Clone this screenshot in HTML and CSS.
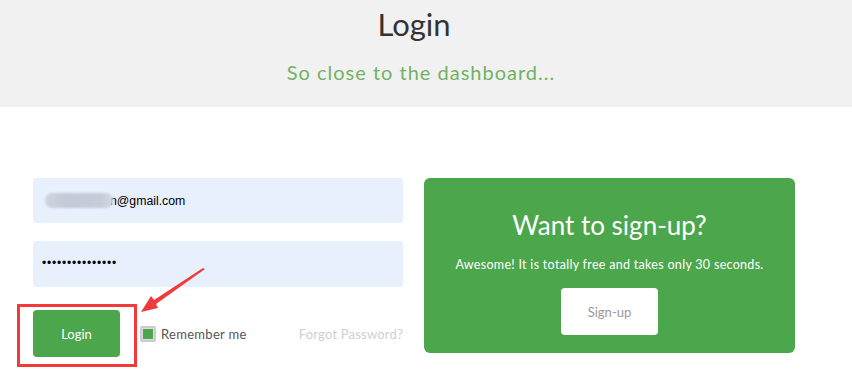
FILE: index.html
```html
<!DOCTYPE html>
<html>
<head>
<meta charset="utf-8">
<link rel="stylesheet" href="styles.css">
</head>
<body>
<header class="hero">
  <h1 class="hero-title">Login</h1>
  <p class="hero-sub">So close to the dashboard...</p>
</header>
<main class="main">
  <form class="login-form">
    <div class="field field-email"><span class="blur"></span><span class="field-text">n@gmail.com</span></div>
    <div class="field field-pass"><span class="dots">•••••••••••••••</span></div>
    <div class="actions">
      <button type="button" class="btn-login">Login</button>
      <label class="remember"><span class="check"><span class="check-fill"></span></span>Remember me</label>
      <a class="forgot">Forgot Password?</a>
    </div>
    <div class="annot-box"></div>
    <svg class="annot-arrow" width="70" height="46" viewBox="0 0 70 46">
      <polygon points="68,1 66,0 17,32 14,28 4,44 21,40 19,36" fill="#f23a3a"/>
    </svg>
  </form>
  <section class="card">
    <h2 class="card-title">Want to sign-up?</h2>
    <p class="card-text">Awesome! It is totally free and takes only 30 seconds.</p>
    <button type="button" class="btn-signup">Sign-up</button>
  </section>
</main>
</body>
</html>
```
FILE: styles.css
```css
* { box-sizing: border-box; }
html, body { margin: 0; padding: 0; background: #fff; }
body { font-family: Lato, "Open Sans", sans-serif; width: 852px; height: 376px; overflow: hidden; }

.hero { background: #f1f1f1; height: 107px; text-align: center; padding-top: 6px; }
.hero-title { margin: 0; padding-right: 24px; font-weight: 400; font-size: 31px; line-height: 36px; color: #333; letter-spacing: 0; }
.hero-sub { margin: 18px 0 0; padding-right: 10px; font-size: 20px; line-height: 24px; color: #71b264; font-weight: 400; letter-spacing: 1px; }

.main { display: flex; padding: 71px 0 0 33px; gap: 21px; }

.login-form { position: relative; width: 370px; margin: 0; }
.field { background: #e8f0fe; border-radius: 3px; display: flex; align-items: center; padding-left: 12px; font-family: "Liberation Sans", Arial, sans-serif; font-size: 12.3px; color: #000; }
.field-email { height: 45px; }
.field-pass { height: 46px; margin-top: 18px; padding-left: 9px; }
.blur { display: inline-block; width: 68px; height: 15px; margin-right: -3px; border-radius: 7px; background: linear-gradient(90deg, #d0d6e0, #c4cad6 30%, #c6ccd8 80%, #d3d9e3); filter: blur(1px); position: relative; z-index: 1; }
.dots { font-size: 12px; letter-spacing: 0.8px; position: relative; top: -1px; }

.actions { display: flex; align-items: center; margin-top: 23px; }
.btn-login { width: 87px; height: 47px; border: 0; border-radius: 4px; background: #4ca64c; color: #fff; font-family: Lato, sans-serif; font-size: 13px; padding: 0; }
.remember { display: flex; align-items: center; margin-left: 20px; font-size: 13px; color: #555; letter-spacing: 0.3px; }
.check { width: 16px; height: 16px; border: 2px solid #ccc; border-radius: 2px; background: #ddd; display: flex; align-items: center; justify-content: center; margin-right: 5px; }
.check-fill { width: 10px; height: 10px; background: #4ca64c; }
.forgot { margin-left: auto; font-size: 13px; color: #cfcfcf; letter-spacing: 0.2px; }

.annot-box { position: absolute; left: -16px; top: 126px; width: 120px; height: 63px; border: 3px solid #f23a3a; }
.annot-arrow { position: absolute; left: 104px; top: 90px; }

.card { width: 371px; height: 175px; background: #4ca64c; border-radius: 6px; display: flex; flex-direction: column; align-items: center; color: #fff; padding-top: 32px; }
.card-title { margin: 0; font-weight: 400; font-size: 26px; line-height: 30px; letter-spacing: 0; }
.card-text { margin: 17px 0 0; font-size: 12.5px; line-height: 16px; letter-spacing: 0.3px; }
.btn-signup { margin-top: 15px; width: 97px; height: 47px; border: 0; border-radius: 4px; background: #fff; color: #999; font-family: Lato, sans-serif; font-size: 13px; padding: 0; }
```
